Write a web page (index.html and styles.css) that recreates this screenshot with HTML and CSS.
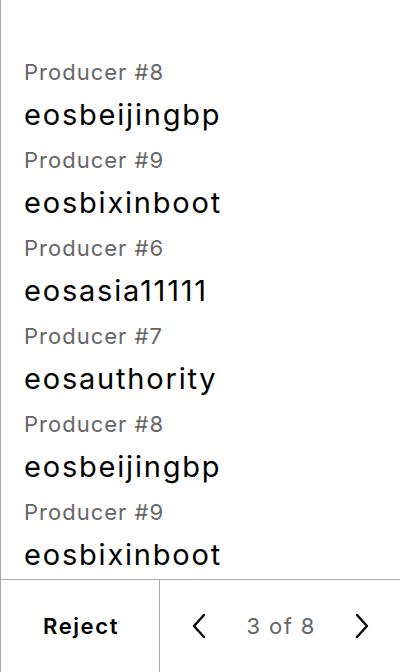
FILE: index.html
```html
<!DOCTYPE html>
<html>
<head>
<meta charset="utf-8">
<link rel="stylesheet" href="styles.css">
</head>
<body>
<div class="screen">
  <div class="list">
    <div class="item"><div class="label">Producer #8</div><div class="name">eosbeijingbp</div></div>
    <div class="item"><div class="label">Producer #9</div><div class="name">eosbixinboot</div></div>
    <div class="item"><div class="label">Producer #6</div><div class="name">eosasia11111</div></div>
    <div class="item"><div class="label">Producer #7</div><div class="name">eosauthority</div></div>
    <div class="item"><div class="label">Producer #8</div><div class="name">eosbeijingbp</div></div>
    <div class="item"><div class="label">Producer #9</div><div class="name">eosbixinboot</div></div>
  </div>
  <div class="footer">
    <button class="reject">Reject</button>
    <div class="pager">
      <button class="nav" aria-label="Previous">
        <svg width="16" height="26" viewBox="0 0 16 26"><path d="M13 2 L3 13 L13 24" fill="none" stroke="#000" stroke-width="2.4" stroke-linecap="round" stroke-linejoin="round"/></svg>
      </button>
      <span class="count">3 of 8</span>
      <button class="nav" aria-label="Next">
        <svg width="16" height="26" viewBox="0 0 16 26"><path d="M3 2 L13 13 L3 24" fill="none" stroke="#000" stroke-width="2.4" stroke-linecap="round" stroke-linejoin="round"/></svg>
      </button>
    </div>
  </div>
</div>
</body>
</html>
```
FILE: styles.css
```css
* { box-sizing: border-box; }
html, body { margin: 0; padding: 0; background: #fff; }
body { font-family: Inter, "Noto Sans", sans-serif; }
.screen {
  width: 400px;
  height: 672px;
  border-left: 1px solid #aaa;
  display: flex;
  flex-direction: column;
}
.list {
  flex: 1;
  overflow: hidden;
  padding: 60px 0 0 23px;
  display: flex;
  flex-direction: column;
  gap: 16px;
}
.item { display: flex; flex-direction: column; gap: 14px; }
.label { font-size: 22px; line-height: 24px; color: #666; letter-spacing: 1px; }
.name { font-size: 29px; line-height: 34px; color: #000; letter-spacing: 1.8px; }
.footer {
  height: 93px;
  border-top: 1px solid #aaa;
  display: flex;
}
.reject {
  width: 159px;
  border: none;
  border-right: 1px solid #aaa;
  background: none;
  font-family: inherit;
  font-size: 22px;
  font-weight: 600;
  letter-spacing: 1.6px;
  color: #000;
  padding: 0 0 0 2px;
}
.pager {
  flex: 1;
  display: flex;
  align-items: center;
  justify-content: space-between;
  padding: 0 30px 0 31px;
}
.nav { border: none; background: none; padding: 0; display: flex; }
.count { font-size: 22px; color: #666; letter-spacing: 1.4px; margin-right: -1.4px; }
```
